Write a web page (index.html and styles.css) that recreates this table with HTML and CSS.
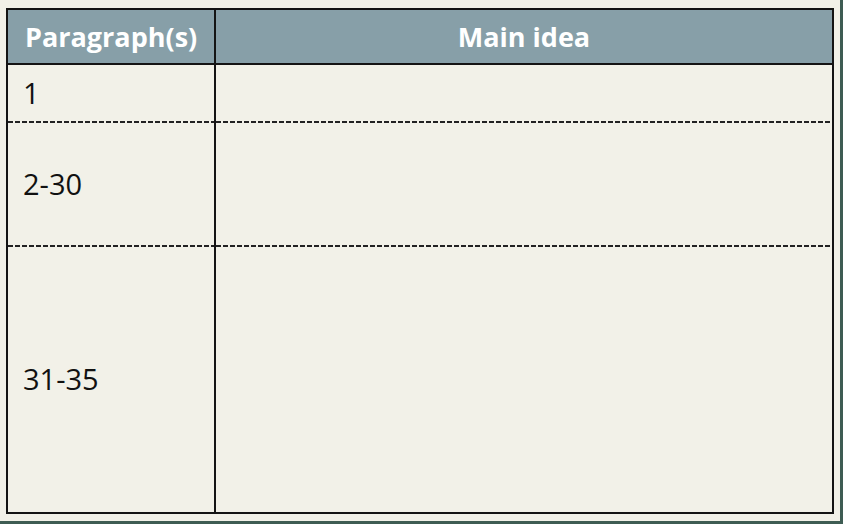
FILE: index.html
```html
<!DOCTYPE html>
<html>
<head>
<meta charset="utf-8">
<link rel="stylesheet" href="styles.css">
</head>
<body>
<div class="page">
  <div class="sheet">
    <div class="table">
      <div class="cell head left">Paragraph(s)</div>
      <div class="cell head right center">Main idea</div>
      <div class="cell left dash">1</div>
      <div class="cell right dash"></div>
      <div class="cell left dash">2-30</div>
      <div class="cell right dash"></div>
      <div class="cell left">31-35</div>
      <div class="cell right"></div>
    </div>
  </div>
  <div class="edge-right"></div>
</div>
<div class="edge-bottom"></div>
</body>
</html>
```

FILE: styles.css
```css
html, body {
  margin: 0;
  padding: 0;
}
body {
  width: 843px;
  height: 524px;
  overflow: hidden;
  background: #f2f1e8;
  font-family: "Open Sans", "DejaVu Sans", sans-serif;
  display: flex;
  flex-direction: column;
}
.page {
  display: flex;
  height: 521px;
}
.sheet {
  flex: 1;
  padding: 8px 6px 0 6px;
}
.edge-right {
  width: 3px;
  background: #3e5c53;
}
.edge-bottom {
  height: 3px;
  background: #3e5c53;
}
.table {
  width: 828px;
  height: 506px;
  box-sizing: border-box;
  border: 2px solid #141414;
  display: grid;
  grid-template-columns: 208px 1fr;
  grid-template-rows: 55px 58px 124px 1fr;
}
.cell {
  display: flex;
  align-items: center;
  color: #111;
  font-size: 29px;
  padding-left: 15px;
  padding-bottom: 3px;
}
.left {
  border-right: 2px solid #141414;
}
.head {
  background: #879fa8;
  color: #fff;
  font-weight: 700;
  font-size: 27px;
  border-bottom: 2px solid #141414;
  padding-left: 17px;
  padding-bottom: 0;
}
.head.center {
  justify-content: center;
  padding-left: 0;
}
.dash {
  background-image: repeating-linear-gradient(to right, #222 0 5px, transparent 5px 7px);
  background-size: 100% 2px;
  background-position: 0 100%;
  background-repeat: no-repeat;
}
```
